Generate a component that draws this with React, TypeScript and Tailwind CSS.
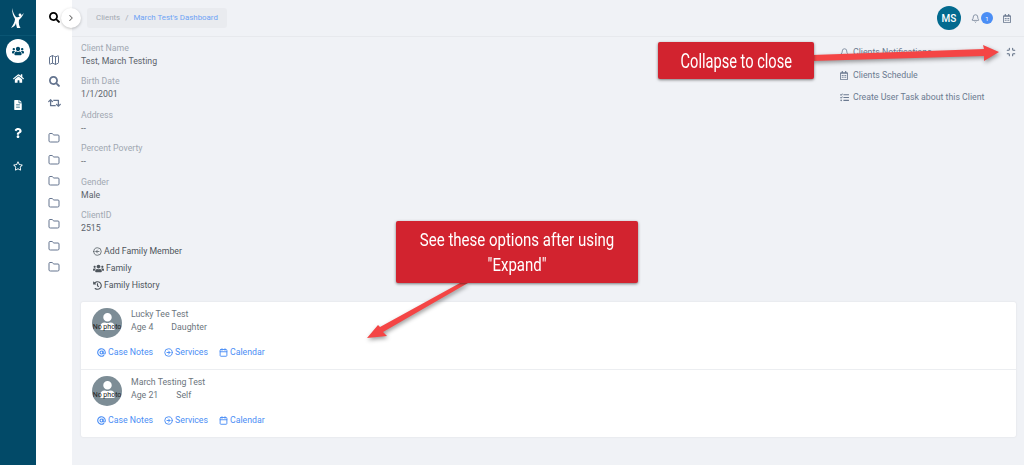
import { Calendar, Bell, ChevronRight, CircleArrowRight, Map, Minimize, Folder, AtSign } from "lucide-react";
import { FaFileAlt, FaHistory, FaHome, FaQuestion, FaRegCalendarAlt, FaRegStar, FaRetweet, FaSearch, FaTasks, FaUsers, FaUser } from "react-icons/fa";

const fields = [
  { label: "Client Name", value: "Test, March Testing" },
  { label: "Birth Date", value: "1/1/2001" },
  { label: "Address", value: "--" },
  { label: "Percent Poverty", value: "--" },
  { label: "Gender", value: "Male" },
  { label: "ClientID", value: "2515" },
];

const members = [
  { name: "Lucky Tee Test", age: "Age 4", relation: "Daughter" },
  { name: "March Testing Test", age: "Age 21", relation: "Self" },
];

function Logo() {
  return (
    <svg viewBox="0 0 16 22" className="h-[22px] w-[16px]" fill="#fff">
      <circle cx="10" cy="8" r="1.4" />
      <path d="M2 1 C3 5 4 8 6 10 C8 11 10 10 14 6 C12 10 10 12 9 13 C8.5 16 9 19 10.5 21 L7 21 C6.5 19 6 17 6 16 C5.5 18 4 20 1 21 C3 18 5 15 5 12 C3 9 2 5 2 1 Z" />
    </svg>
  );
}

function Avatar() {
  return (
    <div className="relative flex h-[30px] w-[30px] shrink-0 items-start justify-center overflow-hidden rounded-full bg-[#7d8d96]">
      <FaUser className="mt-[5px] h-[17px] w-[17px] text-white" />
      <span className="absolute inset-x-0 top-[14px] whitespace-nowrap text-center text-[7px] leading-[10px] text-[#222]">No photo</span>
    </div>
  );
}

function MemberRow({ m, last }: { m: (typeof members)[number]; last?: boolean }) {
  return (
    <div className={`h-[68px] pl-[11px] pt-[6px] ${last ? "" : "border-b border-[#eceef1]"}`}>
      <div className="flex">
        <Avatar />
        <div className="ml-[9px] text-[8.75px] leading-[13px] text-[#6c757d]">
          <div>{m.name}</div>
          <div className="flex">
            <span>{m.age}</span>
            <span className="w-[18px]" />
            <span>{m.relation}</span>
          </div>
        </div>
      </div>
      <div className="ml-[5px] mt-[8px] flex items-center text-[8.75px] leading-[13px] text-[#4b8ef5]">
        <AtSign className="mr-[2px] h-[9px] w-[9px]" strokeWidth={3} />
        <span>Case Notes</span>
        <CircleArrowRight className="ml-[11px] mr-[2px] h-[9px] w-[9px]" strokeWidth={2.5} />
        <span>Services</span>
        <Calendar className="ml-[11px] mr-[2px] h-[9px] w-[9px]" strokeWidth={2.5} />
        <span>Calendar</span>
      </div>
    </div>
  );
}

export default function App() {
  return (
    <div className="relative flex h-[465px] w-[1024px] overflow-hidden bg-[#f0f2f6] font-['Roboto','Liberation_Sans',sans-serif]">
      {/* Dark nav */}
      <div className="flex h-full w-[36px] shrink-0 flex-col items-center bg-[#024a68] shadow-[1px_0_2px_rgba(0,0,0,0.35)]">
        <div className="flex h-[36px] w-full items-center justify-center border-b border-[#0a5573]">
          <Logo />
        </div>
        <div className="mt-[3px] flex h-[24px] w-[24px] items-center justify-center rounded-full bg-white">
          <FaUsers className="h-[12px] w-[12px] text-[#024a68]" />
        </div>
        <FaHome className="mt-[10px] h-[11px] w-[11px] text-white" />
        <FaFileAlt className="mt-[16px] h-[10px] w-[8px] text-white" />
        <FaQuestion className="mt-[18px] h-[10px] w-[8px] text-white" />
        <FaRegStar className="mt-[23px] h-[10px] w-[10px] text-white" />
      </div>

      {/* Tool rail */}
      <div className="flex h-full w-[36px] shrink-0 flex-col items-center bg-white text-[#64748f]">
        <FaSearch className="mt-[12px] h-[11px] w-[11px] text-black" />
        <Map className="mt-[31px] h-[12px] w-[12px]" />
        <FaSearch className="mt-[10px] h-[11px] w-[11px]" />
        <FaRetweet className="mt-[10px] h-[12px] w-[13px]" />
        <div className="mt-[23px] flex flex-col gap-[9.5px]">
          {[0, 1, 2, 3, 4, 5, 6].map((i) => (
            <Folder key={i} className="h-[12px] w-[12px]" />
          ))}
        </div>
      </div>

      {/* Main */}
      <div className="flex min-w-0 flex-1 flex-col">
        <div className="flex h-[37px] shrink-0 items-center border-b border-[#e7e9ed] pl-[15px] pr-[13px]">
          <div className="flex h-[20px] w-[140px] items-center whitespace-nowrap rounded-[3px] bg-[#e9ebef] pl-[9px] text-[7.9px] text-[#a3a9b2]">
            <span>Clients</span>
            <span className="mx-[5px]">/</span>
            <span className="text-[#6ea3f5]">March Test's Dashboard</span>
          </div>
          <div className="ml-auto flex h-[24px] w-[24px] items-center justify-center rounded-full bg-[#026a8f] text-[10px] font-medium text-white">MS</div>
          <Bell className="ml-[10px] h-[9px] w-[9px] text-[#6b7a90]" />
          <div className="ml-[1px] flex h-[12px] w-[12px] items-center justify-center rounded-full bg-[#4b8ef5] text-[6px] text-white">1</div>
          <FaRegCalendarAlt className="ml-[10px] h-[9px] w-[8px] text-[#6b7a90]" />
        </div>

        <div className="flex flex-1 flex-col pl-[9px] pr-[8px]">
          <div className="flex">
            <div className="w-[700px] pt-[4px]">
              {fields.map((f) => (
                <div key={f.label} className="h-[33.4px] pt-[1px] text-[8.75px] leading-[13px]">
                  <div className="text-[#a1a8b2]">{f.label}</div>
                  <div className="text-[#5c636b]">{f.value}</div>
                </div>
              ))}
            </div>
            <div className="ml-[59px] flex-1 pt-[9px] text-[8.75px] leading-[13px] text-[#6b7a90]">
              <div className="flex items-center"><Bell className="mr-[4px] h-[9px] w-[9px]" />Clients Notifications</div>
              <div className="mt-[10px] flex items-center"><FaRegCalendarAlt className="mr-[5px] h-[9px] w-[8px]" />Clients Schedule</div>
              <div className="mt-[9px] flex items-center"><FaTasks className="mr-[4px] h-[9px] w-[9px]" />Create User Task about this Client</div>
            </div>
            <Minimize className="mt-[10px] h-[10px] w-[10px] text-[#5c6b80]" strokeWidth={2.5} />
          </div>

          <div className="ml-[12px] mt-[2px] text-[8.75px] leading-[16.7px] text-[#4e555c]">
            <div className="flex items-center"><CircleArrowRight className="mr-[2px] h-[9px] w-[9px] rotate-180" />Add Family Member</div>
            <div className="flex items-center"><FaUsers className="mr-[2px] h-[11px] w-[11px]" />Family</div>
            <div className="flex items-center"><FaHistory className="mr-[2px] h-[9px] w-[9px]" />Family History</div>
          </div>

          <div className="mt-[9px] h-[135px] rounded-[2px] bg-white shadow-[0_0_2px_rgba(0,0,0,0.1)]">
            {members.map((m, i) => (
              <MemberRow key={m.name} m={m} last={i === members.length - 1} />
            ))}
          </div>
        </div>

        {/* Expand toggle over the rail edge */}
        <div className="absolute left-[61px] top-[8px] flex h-[20px] w-[20px] items-center justify-center rounded-full bg-white text-[#666] shadow-[0_1px_3px_rgba(0,0,0,0.25)]">
          <ChevronRight className="h-[10px] w-[10px]" strokeWidth={2.5} />
        </div>
      </div>

      {/* Annotation arrows */}
      <svg className="pointer-events-none absolute inset-0 h-[465px] w-[1024px] drop-shadow-[1px_2px_2px_rgba(0,0,0,0.4)]" viewBox="0 0 1024 465" fill="#f44545">
        <path d="M812 55 L984 49 L983 45 L999 52 L984 61 L984 56 L812 61 Z" />
        <path d="M460 283 L468 283 L383 332 L387 336 L367 338 L378 325 L380 327 Z" />
      </svg>

      {/* Annotation callouts */}
      <div className="absolute left-[658px] top-[42px] flex h-[37px] w-[156px] items-center justify-center rounded-[2px] bg-[#d2232f] text-[20px] text-white shadow-[0_1px_3px_rgba(0,0,0,0.5)]">
        <span className="inline-block whitespace-nowrap scale-x-[0.73]">Collapse to close</span>
      </div>
      <div className="absolute left-[396px] top-[221px] flex h-[62px] w-[242px] items-center justify-center rounded-[2px] bg-[#d2232f] text-center text-[19px] leading-[25px] text-white shadow-[0_1px_3px_rgba(0,0,0,0.5)]">
        <span className="inline-block whitespace-nowrap scale-x-[0.79]">
          See these options after using
          <br />
          "Expand"
        </span>
      </div>
    </div>
  );
}
